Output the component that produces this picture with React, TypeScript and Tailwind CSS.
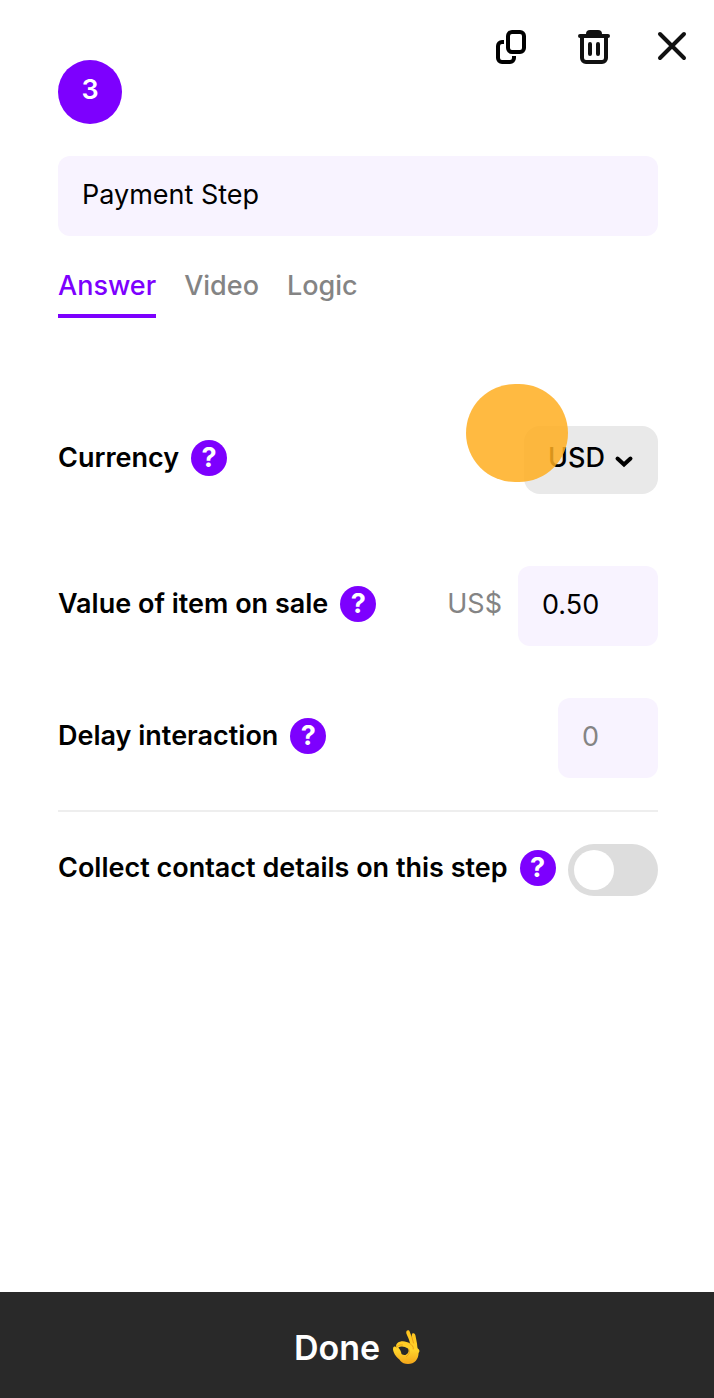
import { useState } from 'react';
import type { ReactNode } from 'react';

const TABS = ['Answer', 'Video', 'Logic'];

const CopyIcon = () => (
  <svg className="size-10" viewBox="0 0 40 40" fill="none" stroke="#000" strokeWidth="4" aria-hidden="true">
    <rect x="16" y="4" width="16" height="20" rx="4" />
    <path d="M12 14H10a4 4 0 0 0-4 4V30a4 4 0 0 0 4 4H18a4 4 0 0 0 4-4V28" />
  </svg>
);

const TrashIcon = () => (
  <svg className="size-10" viewBox="0 0 40 40" fill="none" stroke="#111" strokeWidth="4" strokeLinecap="round" aria-hidden="true">
    <path d="M14 7V6a4 4 0 0 1 4-4h8a4 4 0 0 1 4 4v1z" fill="#111" stroke="none" />
    <path d="M8 8H36M10 8V30a4 4 0 0 0 4 4H30a4 4 0 0 0 4-4V8M18 16V26M26 16V26" />
  </svg>
);

const CloseIcon = () => (
  <svg className="size-10" viewBox="0 0 40 40" fill="none" stroke="#111" strokeWidth="4" strokeLinecap="round" aria-hidden="true">
    <path d="M8 6L32 30M32 6L8 30" />
  </svg>
);

const OkHandIcon = () => (
  <svg className="h-9 w-7" viewBox="0 0 28 36" aria-hidden="true">
    <defs>
      <linearGradient id="skin" x1="0" y1="0" x2="0" y2="1">
        <stop offset="0" stopColor="#ffc21c" />
        <stop offset="0.6" stopColor="#ffd32b" />
        <stop offset="1" stopColor="#f3a51a" />
      </linearGradient>
    </defs>
    <path
      d="M14.500 2C15.700.8 17.200 1.200 17.700 2.700L20 8.500C19.800 6.200 19.500 4.800 20.800 4.300C22.300 3.800 23.200 5 23.500 6.700L25 14.500C25.300 16.700 25.200 18.200 25.800 19.500C27.800 20.800 28 22.400 26.600 24C26.400 30.500 22.500 35 16 35C12.500 35 10.200 34 8.500 32C7.500 30 4.500 28.500 2.800 25.500C1.700 23.500.5 21 1.200 18.600C1.800 17 3.600 17.200 4.500 18.300C3.300 15.800 5 13.500 8 12.700C11.500 11.700 15 12.700 18 14.600C17.500 10.500 14.800 6 14.200 4Z"
      fill="url(#skin)"
    />
    <path
      d="M6.300 18.500C8.800 16.800 12.500 17.200 16 19.500C17.500 21.500 16.500 24.500 13.500 26C11.800 26 10.500 25.800 9.500 25C9.200 22.500 8 20.500 6.300 18.500Z"
      fill="#292929"
    />
    <path
      d="M4.500 18.300C5 16.800 7.500 15.600 10.500 15.900M18 14.600C20 16 21.800 17.800 21.300 20M20 8.500L21.500 14M17 20.500C18 23 17.200 25.500 14.500 27.500"
      fill="none"
      stroke="#e9a01a"
      strokeWidth="1"
      strokeLinecap="round"
    />
  </svg>
);

const HelpButton = ({ topic }: { topic: string }) => (
  <button
    type="button"
    aria-label={`Help: ${topic}`}
    className="flex size-9 shrink-0 items-center justify-center rounded-full bg-[#7d00fe] leading-9 font-bold text-white"
  >
    ?
  </button>
);

interface SettingRowProps {
  id: string;
  label: string;
  className: string;
  children: ReactNode;
}

const SettingRow = ({ id, label, className, children }: SettingRowProps) => (
  <div className={`flex items-center justify-between ${className}`}>
    <div className="flex items-center gap-3 pb-1">
      <label htmlFor={id} className="leading-9 font-semibold whitespace-nowrap">
        {label}
      </label>
      <HelpButton topic={label} />
    </div>
    {children}
  </div>
);

export default function App() {
  const [activeTab, setActiveTab] = useState('Answer');
  const [collectDetails, setCollectDetails] = useState(false);

  return (
    <div className="flex min-h-screen flex-col bg-white font-['Inter',sans-serif] text-[27px] text-black">
      <header className="flex items-start justify-between pt-7 pr-[22px] pl-[58px]">
        <div className="mt-8 flex size-16 items-center justify-center rounded-full bg-[#7d00fe] pb-1 font-semibold text-white">
          3
        </div>
        <div className="flex gap-10">
          <button type="button" aria-label="Duplicate step">
            <CopyIcon />
          </button>
          <button type="button" aria-label="Delete step">
            <TrashIcon />
          </button>
          <button type="button" aria-label="Close">
            <CloseIcon />
          </button>
        </div>
      </header>

      <main className="flex-1 pt-8 pr-14 pl-[58px]">
        <input
          type="text"
          aria-label="Step name"
          defaultValue="Payment Step"
          className="h-20 w-full rounded-xl bg-[#f8f3ff] px-6 pb-1 outline-none"
        />

        <nav className="mt-8 flex gap-7">
          {TABS.map((tab) => (
            <button
              key={tab}
              type="button"
              onClick={() => setActiveTab(tab)}
              className={`h-[50px] border-b-4 pb-[10px] leading-9 font-medium ${
                tab === activeTab ? 'border-[#7d00fe] text-[#7d00fe]' : 'border-transparent text-[#848484]'
              }`}
            >
              {tab}
            </button>
          ))}
        </nav>

        <SettingRow id="currency" label="Currency" className="mt-[108px]">
          <div className="relative">
            <select
              id="currency"
              defaultValue="USD"
              className="h-[68px] w-[134px] appearance-none rounded-2xl bg-[#e9e9e9] pb-1 pl-6 font-medium outline-none"
            >
              <option>USD</option>
              <option>EUR</option>
              <option>GBP</option>
            </select>
            <svg
              className="pointer-events-none absolute top-7 right-6 h-4 w-5"
              viewBox="0 0 20 16"
              fill="none"
              stroke="#000"
              strokeWidth="4"
              strokeLinecap="round"
              aria-hidden="true"
            >
              <path d="M3.500 4.500L10 10.500L16.500 4.500" />
            </svg>
            {/* click marker */}
            <span className="pointer-events-none absolute right-[90px] bottom-3 h-[98px] w-[102px] rounded-full bg-[#ffae20]/85" />
          </div>
        </SettingRow>

        <SettingRow id="price" label="Value of item on sale" className="mt-[72px]">
          <div className="flex items-center gap-4">
            <span className="pb-1 text-[#848484]">US$</span>
            <input
              id="price"
              type="text"
              inputMode="decimal"
              defaultValue="0.50"
              className="h-20 w-[140px] rounded-xl bg-[#f8f3ff] px-6 pb-1 outline-none"
            />
          </div>
        </SettingRow>

        <SettingRow id="delay" label="Delay interaction" className="mt-[52px]">
          <input
            id="delay"
            type="text"
            inputMode="numeric"
            placeholder="0"
            className="h-20 w-[100px] rounded-xl bg-[#f8f3ff] px-6 pb-1 outline-none placeholder:text-[#848484]"
          />
        </SettingRow>

        <hr className="mt-8 border-t-2 border-[#eeeeee]" />

        <SettingRow id="collect" label="Collect contact details on this step" className="mt-8">
          <div className="relative h-[52px]">
            <input
              id="collect"
              type="checkbox"
              role="switch"
              checked={collectDetails}
              onChange={(e) => setCollectDetails(e.target.checked)}
              className="peer h-[52px] w-[90px] appearance-none rounded-full bg-[#dddddd] checked:bg-[#7d00fe]"
            />
            <span className="pointer-events-none absolute top-[6px] left-[6px] size-10 rounded-full bg-white peer-checked:left-11" />
          </div>
        </SettingRow>
      </main>

      <button
        type="button"
        className="flex h-[106px] w-full items-center justify-center gap-3 bg-[#292929] pt-1 text-[34px] font-semibold text-white"
      >
        Done
        <OkHandIcon />
      </button>
    </div>
  );
}
